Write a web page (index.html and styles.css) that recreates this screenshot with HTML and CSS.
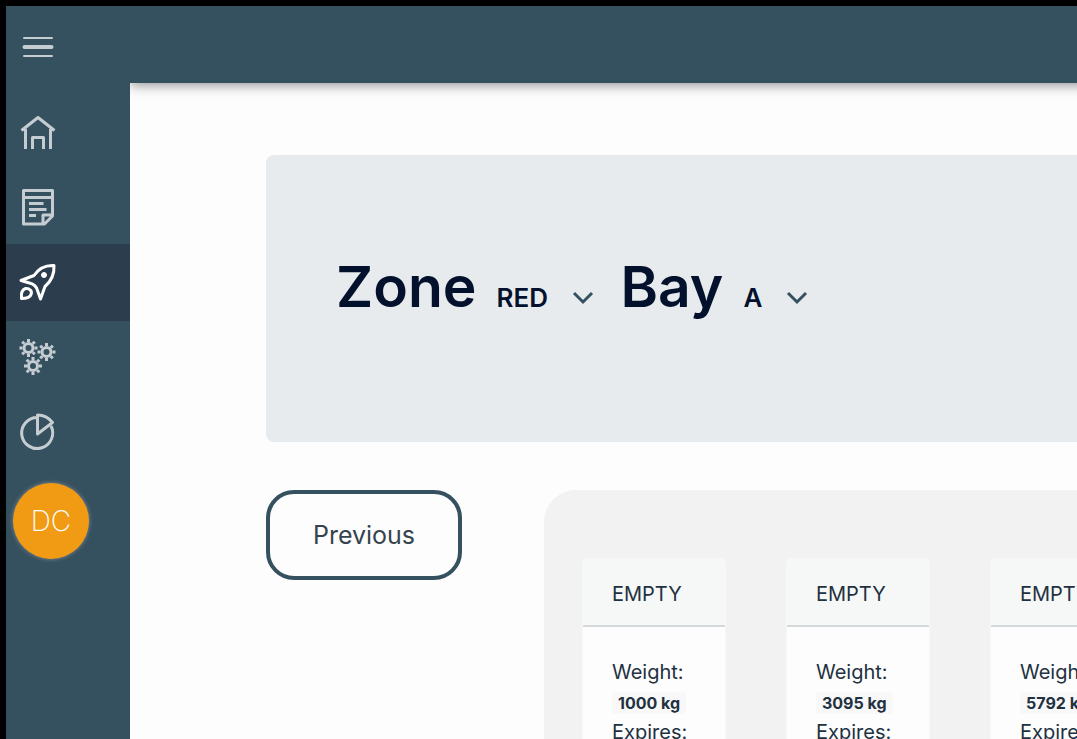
FILE: index.html
```html
<!DOCTYPE html>
<html lang="en">
<head>
<meta charset="utf-8">
<meta name="viewport" content="width=device-width, initial-scale=1">
<title>Zone and bay</title>
<link rel="stylesheet" href="styles.css">
</head>
<body>
<div class="app">
  <aside class="sidebar">
    <button class="menu" type="button" aria-label="Menu">
      <svg width="32" height="24" viewBox="0 0 32 24" fill="none" stroke="#c5cdd3" stroke-linecap="round"><path d="M2 3H30M2 21H30" stroke-width="2"/><path d="M2.500 12H29.500" stroke-width="4"/></svg>
    </button>
    <nav class="nav">
      <a class="nav-item" href="#home" aria-label="Home">
        <svg class="icon" viewBox="0 0 36 36"><path d="M1.500 15.500 18 2.500 34.500 15.500M5.500 14V34M30.500 14V34M12.500 34V22.500H23.500V34"/></svg>
      </a>
      <a class="nav-item" href="#notes" aria-label="Notes">
        <svg class="icon" viewBox="0 0 36 36"><path d="M3.500 .5H32.500V26L24.500 34H3.500ZM3.500 7.500H32.500M23 33.500V25H32M9 13.500H23.500M9 19.500H26.500M9 25.500H16"/></svg>
      </a>
      <a class="nav-item active" href="#bays" aria-label="Bays" aria-current="page">
        <svg class="icon" viewBox="0 0 36 36"><path d="M34 .5C25 0 19 3 14 10.500L1 15.500 9.500 18C14 19 16.500 21.500 17.500 25.500L20.500 34 25 21.500C32 15.500 34.500 9.500 34 .5ZM1.500 33.500C1 28.500 2 24.500 5.500 23.500 9.500 23 12.500 26 11 29.500 10 33 6 33.500 1.500 33.500Z"/><circle cx="24" cy="10" r="2.500" fill="currentColor" stroke-width="1"/></svg>
      </a>
      <a class="nav-item" href="#settings" aria-label="Settings">
        <svg class="icon" viewBox="0 0 36 36">
          <defs><g id="gear"><circle r="4.500" stroke-width="3"/><path d="M0-6V-9M0 6V9M-6 0H-9M6 0H9M-4.200-4.200-6.300-6.300M4.200-4.200 6.300-6.300M-4.200 4.200-6.300 6.300M4.200 4.200 6.300 6.300" stroke-width="3"/></g></defs>
          <use href="#gear" x="8.500" y="8"/><use href="#gear" x="26.500" y="12"/><use href="#gear" x="13" y="26"/>
        </svg>
      </a>
      <a class="nav-item" href="#reports" aria-label="Reports">
        <svg class="icon" viewBox="0 0 36 36"><path d="M17.500 2.500A15.500 15.500 0 1 0 31 11M17.500 0V19L32.500 7.500C29 3 23.500 0 17.500 0Z"/></svg>
      </a>
    </nav>
    <button class="avatar" type="button">DC</button>
  </aside>
  <header class="topbar"></header>
  <main class="content">
    <section class="hero">
      <label class="hero-label" for="zone">Zone</label>
      <span class="picker">
        <select id="zone"><option>RED</option></select>
        <svg class="chevron" width="22" height="14" viewBox="0 0 22 14"><path d="M2 2 11 11 20 2"/></svg>
      </span>
      <label class="hero-label" for="bay">Bay</label>
      <span class="picker">
        <select id="bay"><option>A</option></select>
        <svg class="chevron" width="22" height="14" viewBox="0 0 22 14"><path d="M2 2 11 11 20 2"/></svg>
      </span>
    </section>
    <div class="row">
      <button class="previous" type="button">Previous</button>
      <section class="rack">
        <article class="card">
          <h2 class="card-title">EMPTY</h2>
          <div class="card-body"><p>Weight:</p><p class="value">1000 kg</p><p>Expires:</p></div>
        </article>
        <article class="card">
          <h2 class="card-title">EMPTY</h2>
          <div class="card-body"><p>Weight:</p><p class="value">3095 kg</p><p>Expires:</p></div>
        </article>
        <article class="card">
          <h2 class="card-title">EMPTY</h2>
          <div class="card-body"><p>Weight:</p><p class="value">5792 kg</p><p>Expires:</p></div>
        </article>
      </section>
    </div>
  </main>
</div>
</body>
</html>
```
FILE: styles.css
```css
* { box-sizing: border-box; }
body {
  margin: 0;
  background: #000;
  font-family: Inter, "Liberation Sans", sans-serif;
  color: #22313f;
  overflow: hidden;
}
button, select { font: inherit; color: inherit; }
.app {
  display: grid;
  grid-template-columns: 124px minmax(0, 1fr);
  grid-template-rows: 77px minmax(0, 1fr);
  height: 100vh;
  padding: 6px 0 0 6px;
}
.sidebar {
  grid-row: 1 / 3;
  display: flex;
  flex-direction: column;
  align-items: flex-start;
  background: #35515f;
}
.menu {
  display: flex;
  margin: 29px 0 0 16px;
  padding: 0;
  border: 0;
  background: none;
}
.nav { align-self: stretch; margin-top: 35px; }
.nav-item {
  display: flex;
  align-items: center;
  height: 77px;
  margin-bottom: -2px;
  padding-left: 14px;
  color: #c5cdd3;
}
.nav-item.active { background: #2c3e4d; color: #fff; }
.icon {
  width: 36px;
  height: 36px;
  fill: none;
  stroke: currentColor;
  stroke-width: 3;
  stroke-linejoin: round;
  overflow: visible;
}
.avatar {
  width: 76px;
  height: 76px;
  margin: 14px 0 0 7px;
  padding: 0;
  border: 0;
  border-radius: 50%;
  background: #f19b15;
  box-shadow: 0 0 4px #8b8d95;
  color: #fff;
  font-size: 28px;
  font-weight: 200;
}
.topbar {
  z-index: 1;
  margin-right: -20px;
  background: #35515f;
  box-shadow: 0 2px 12px #00000070;
  clip-path: inset(0 0 -20px 0);
}
.content {
  padding: 72px 0 0 136px;
  background: #fdfdfd;
  overflow: hidden;
}
.hero {
  display: flex;
  align-items: baseline;
  height: 287px;
  padding: 96px 0 0 70px;
  border-radius: 8px 0 0 8px;
  background: #e7ebee;
  color: #04112d;
}
.hero-label { font-size: 57px; line-height: 72px; font-weight: 600; }
.picker {
  display: flex;
  align-items: center;
  gap: 24px;
  margin: 0 26px 0 20px;
}
.picker select {
  appearance: none;
  margin: 0;
  padding: 0;
  border: 0;
  background: none;
  font-size: 26px;
  line-height: 32px;
  font-weight: 600;
}
.chevron { fill: none; stroke: #35515f; stroke-width: 3; }
.row { display: flex; align-items: flex-start; gap: 82px; margin-top: 48px; }
.previous {
  flex: none;
  width: 196px;
  height: 90px;
  padding: 0;
  border: 4px solid #35515f;
  border-radius: 28px;
  background: #fdfdfd;
  color: #35434e;
  font-size: 25px;
}
.rack {
  flex: 1;
  min-width: 0;
  display: flex;
  gap: 60px;
  padding: 68px 0 60px 38px;
  border-radius: 32px 0 0 0;
  background: #f2f2f2;
}
.card {
  flex: none;
  width: 144px;
  border: 1px solid #f7f8f8;
  border-radius: 6px;
  background: #fdfdfd;
}
.card-title {
  margin: 0;
  padding: 22px 0 18px 29px;
  border-bottom: 2px solid #d6d9db;
  background: #f6f8f8;
  font-size: 20px;
  line-height: 26px;
  font-weight: 400;
}
.card-body { padding: 30px 0 30px 29px; font-size: 20px; line-height: 30px; }
.card-body p { margin: 0; }
.card-body .value {
  width: max-content;
  margin: 5px 0 3px;
  padding: 0 6px;
  border-radius: 4px;
  background: #f8f8f9;
  font-size: 16px;
  line-height: 22px;
  font-weight: 700;
}
```
